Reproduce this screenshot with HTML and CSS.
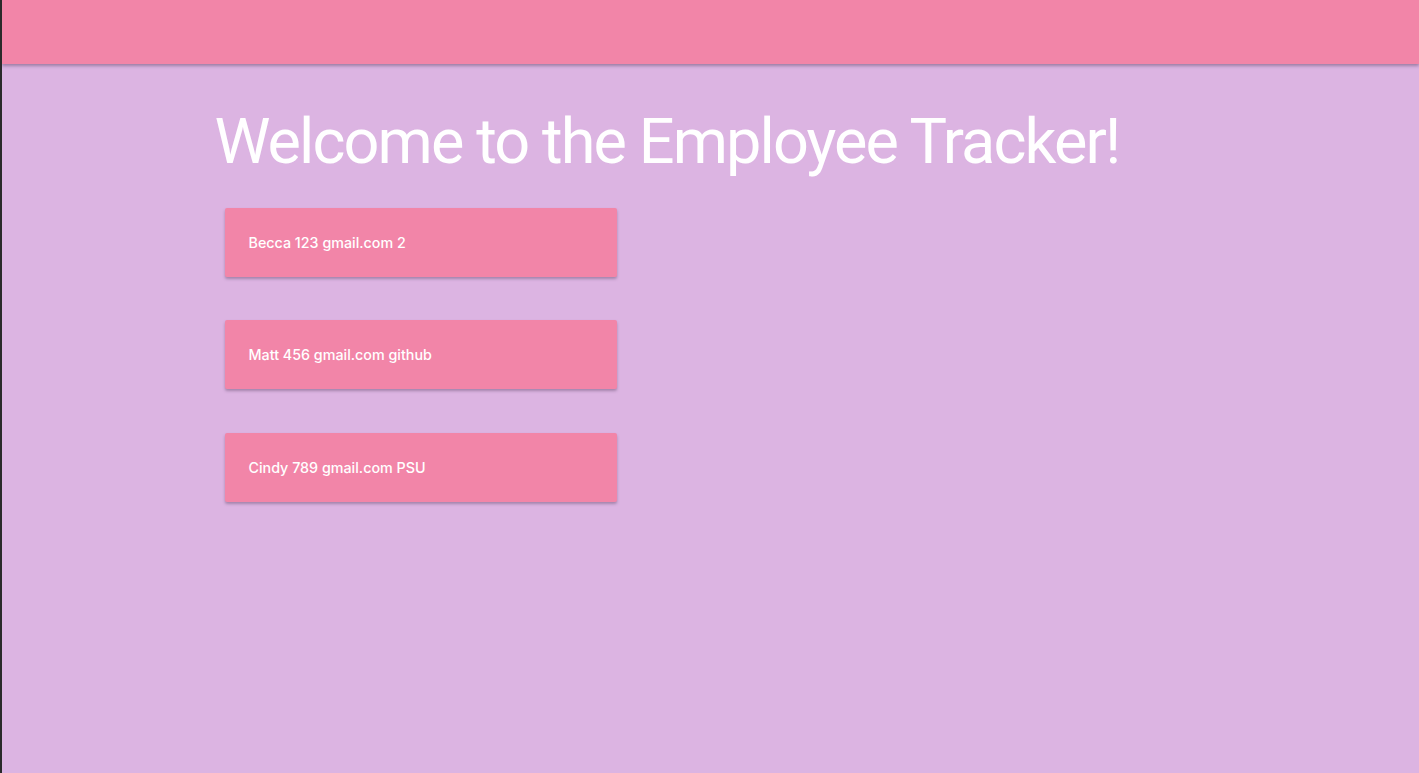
FILE: index.html
```html
<!DOCTYPE html>
<html lang="en">
<head>
<meta charset="utf-8">
<title>Employee Tracker</title>
<link rel="stylesheet" href="styles.css">
</head>
<body>
<header class="topbar"></header>
<main class="container">
  <h1 class="title">Welcome to the Employee Tracker!</h1>
  <div class="cards">
    <div class="card">Becca 123 gmail.com 2</div>
    <div class="card">Matt 456 gmail.com github</div>
    <div class="card">Cindy 789 gmail.com PSU</div>
  </div>
</main>
</body>
</html>
```

FILE: styles.css
```css
html, body {
  margin: 0;
  padding: 0;
  height: 100%;
}
body {
  background: #dcb4e2;
  font-family: "Inter", "Liberation Sans", sans-serif;
  color: #fff;
  border-left: 2px solid #2a2a2a;
  box-sizing: border-box;
}
.topbar {
  height: 64px;
  background: #f285a8;
  box-shadow: 0 2px 3px rgba(80, 60, 90, 0.45);
  position: relative;
}
.container {
  width: 990px;
  margin: 0 auto;
  padding-right: 2px;
}
.title {
  margin: 40px 0 0;
  font-family: "Roboto", "Liberation Sans", sans-serif;
  font-size: 63px;
  font-weight: 400;
  line-height: 1.22;
  letter-spacing: -1.9px;
  white-space: nowrap;
}
.cards {
  display: flex;
  flex-direction: column;
  gap: 43.5px;
  margin: 27px 0 0 10px;
}
.card {
  width: 392px;
  height: 69px;
  box-sizing: border-box;
  padding: 0 24px;
  display: flex;
  align-items: center;
  background: #f285a8;
  border-radius: 2px;
  font-size: 14.3px;
  font-weight: 500;
  box-shadow: 0 2px 3px rgba(80, 60, 90, 0.4);
}
```
